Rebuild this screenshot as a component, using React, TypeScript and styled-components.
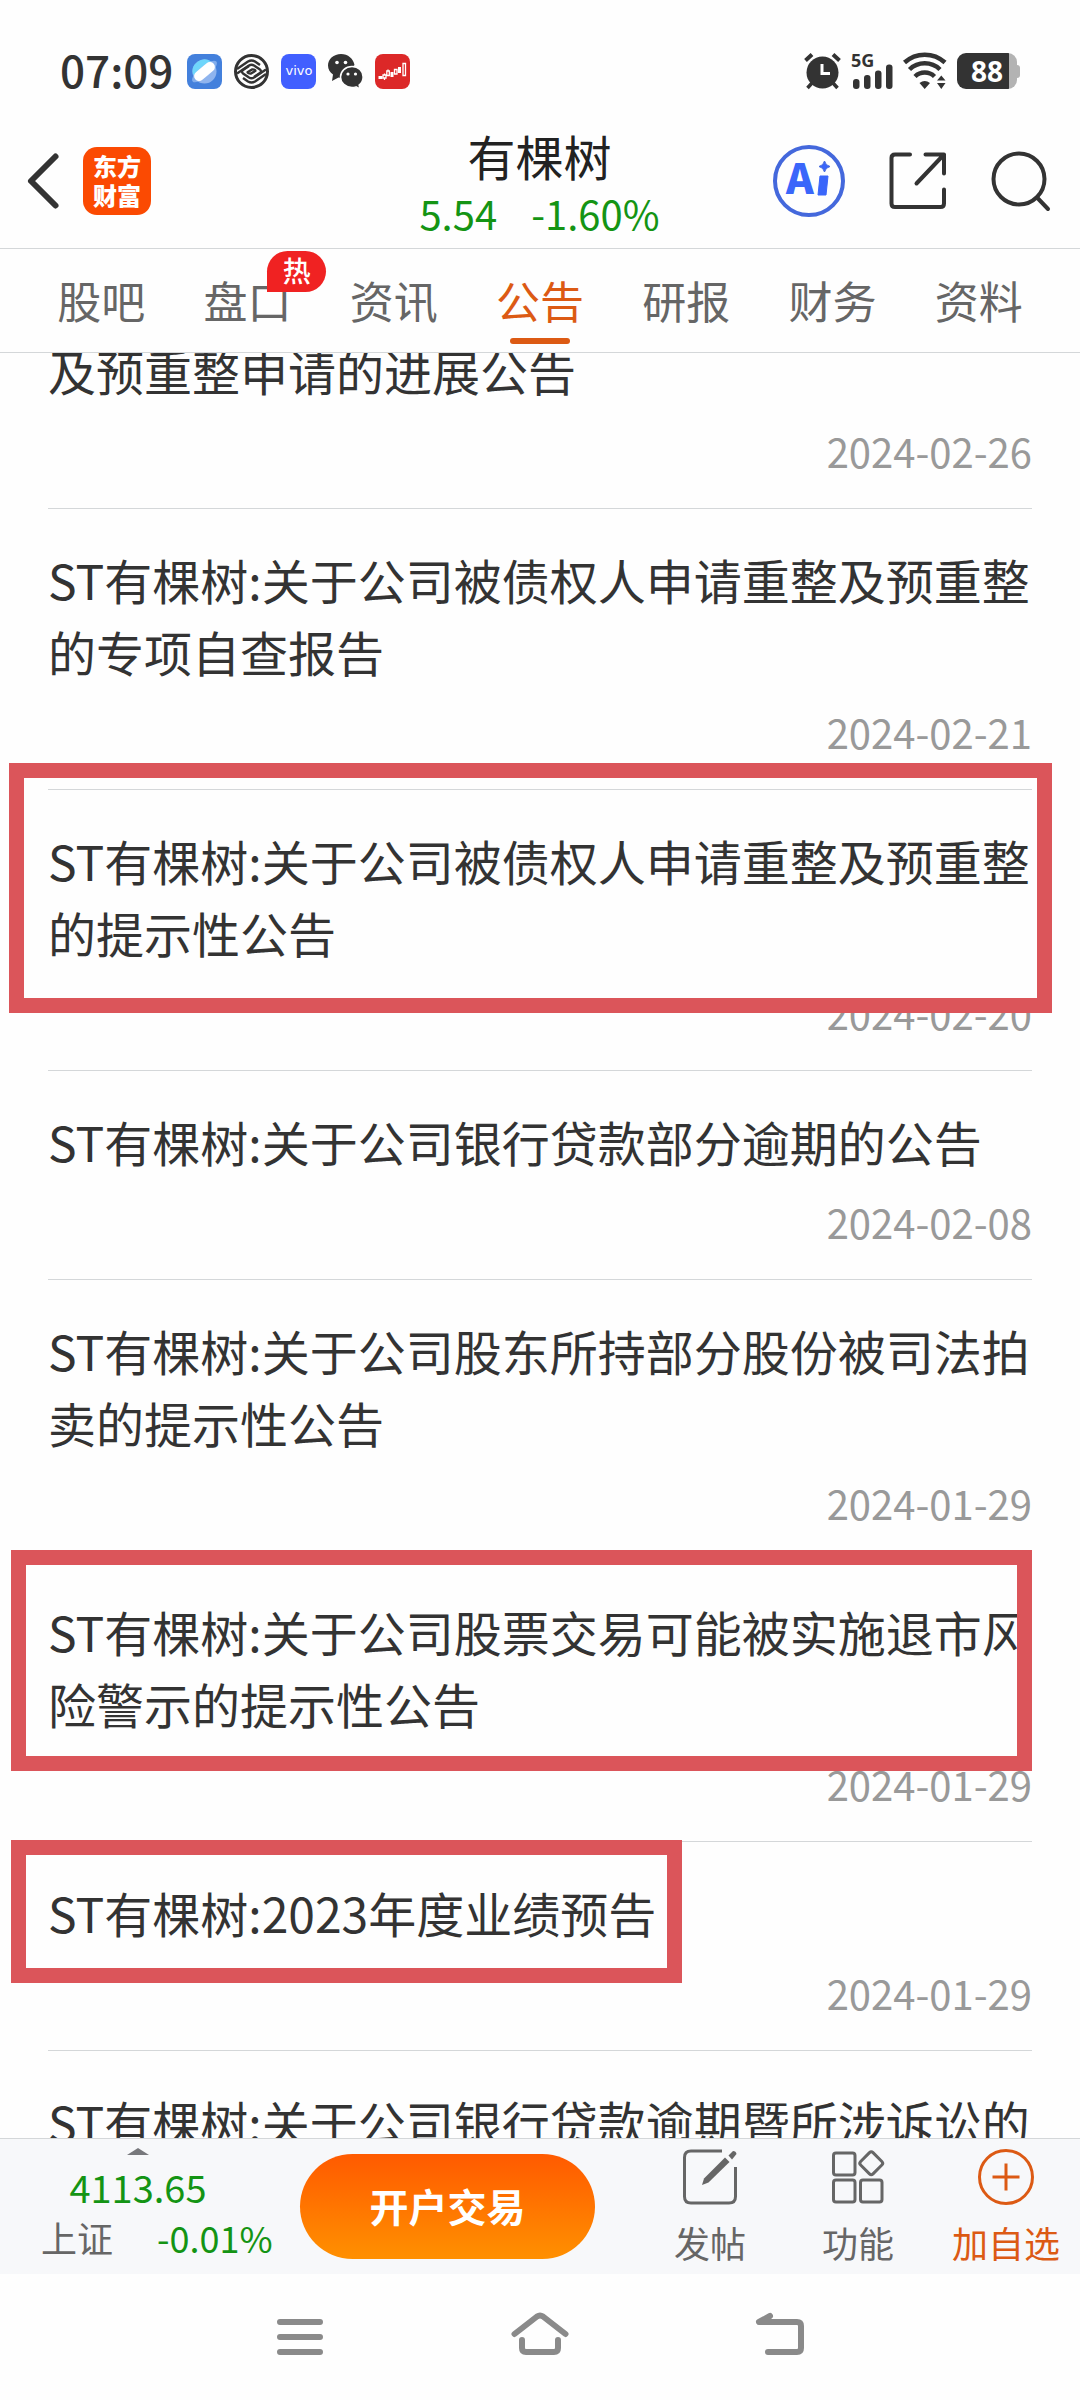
import React from "react";
import styled, { createGlobalStyle, css } from "styled-components";

const ink = "#333333";
const grey = "#666666";
const green = "#149414";
const orange = "#dc5a14";
const line = "#d4d7d9";

const GlobalStyle = createGlobalStyle`
  *, *::before, *::after { box-sizing: border-box; }
  body {
    margin: 0;
    background: #fefefe;
    color: ${ink};
    font-family: "Noto Sans CJK SC", "Noto Sans", sans-serif;
  }
  button { font: inherit; color: inherit; background: none; border: 0; padding: 0; cursor: pointer; }
  a { color: inherit; text-decoration: none; }
  svg { display: block; flex: none; overflow: visible; }
`;

const Screen = styled.div`
  display: flex;
  flex-direction: column;
  height: 100vh;
  overflow: hidden;
`;

/* ---------- status bar ---------- */

const StatusBar = styled.div`
  display: flex;
  align-items: center;
  justify-content: space-between;
  flex: none;
  padding: 28px 60px 0;
  height: 114px;
`;

const StatusGroup = styled.div<{ $gap: number }>`
  display: flex;
  align-items: center;
  gap: ${(p) => p.$gap}px;
`;

const Clock = styled.time`
  font-size: 44px;
  line-height: 48px;
  font-weight: 500;
  margin: -4px 2px 0 0;
`;

const AppBadge = styled.span<{ $color: string }>`
  display: flex;
  align-items: center;
  justify-content: center;
  width: 35px;
  height: 35px;
  border-radius: 8px;
  background: ${(p) => p.$color};
  color: #fff;
  font: 400 13px/14px "DejaVu Sans", sans-serif;
`;

const Battery = styled.span`
  display: flex;
  align-items: center;
  &::after {
    content: "";
    width: 3px;
    height: 13px;
    border-radius: 0 3px 3px 0;
    background: #b3b3b3;
  }
`;

const BatteryBody = styled.span`
  display: flex;
  align-items: center;
  justify-content: center;
  width: 60px;
  height: 36px;
  border-radius: 9px;
  background: linear-gradient(90deg, ${ink} 52px, #b3b3b3 52px);
  color: #fff;
  font: 700 28px/36px "Noto Sans", sans-serif;
`;

/* ---------- header ---------- */

const Header = styled.header`
  display: grid;
  grid-template-columns: 1fr auto 1fr;
  align-items: center;
  flex: none;
  height: 135px;
  padding: 0 29px 0 28px;
  border-bottom: 1px solid ${line};
`;

const HeaderSide = styled.div<{ $end?: boolean }>`
  display: flex;
  align-items: center;
  gap: ${(p) => (p.$end ? 44 : 24)}px;
  justify-content: ${(p) => (p.$end ? "flex-end" : "flex-start")};
`;

const BrandLogo = styled.a`
  display: flex;
  flex-direction: column;
  align-items: center;
  justify-content: center;
  width: 68px;
  height: 68px;
  padding-bottom: 2px;
  border-radius: 14px;
  background: #fb4a02;
  color: #fff;
  font-size: 24px;
  line-height: 29px;
  font-weight: 900;
`;

const Quote = styled.div`
  display: flex;
  flex-direction: column;
  align-items: center;
  padding-top: 4px;
`;

const StockName = styled.h1`
  margin: 0;
  font-size: 48px;
  line-height: 60px;
  font-weight: 400;
  color: #222;
`;

const StockPrice = styled.p`
  display: flex;
  gap: 34px;
  margin: 0;
  font-size: 40px;
  line-height: 56px;
  color: ${green};
`;

/* ---------- tabs ---------- */

const Tabs = styled.nav`
  display: flex;
  flex: none;
  height: 104px;
  padding: 0 28px;
  border-bottom: 1px solid ${line};
`;

const Tab = styled.button<{ $active?: boolean }>`
  position: relative;
  flex: 1;
  padding-bottom: 2px;
  font-size: 44px;
  line-height: 64px;
  color: ${(p) => (p.$active ? orange : grey)};
  ${(p) =>
    p.$active &&
    css`
      &::after {
        content: "";
        position: absolute;
        left: 50%;
        bottom: 8px;
        width: 60px;
        height: 6px;
        margin-left: -30px;
        border-radius: 3px;
        background: ${orange};
      }
    `}
`;

const HotBadge = styled.span`
  position: absolute;
  top: 2px;
  left: 93px;
  width: 59px;
  height: 41px;
  border-radius: 21px 21px 21px 0;
  background: #f02222;
  color: #fff;
  font-size: 28px;
  line-height: 38px;
  font-weight: 500;
  text-align: center;
`;

/* ---------- announcements ---------- */

const Viewport = styled.main`
  flex: 1;
  min-height: 0;
  overflow: hidden;
`;

/* The list rests part-way through a scroll, its first line under the tabs. */
const List = styled.ul`
  list-style: none;
  margin: -19px 0 0;
  padding: 0 48px;
`;

const Item = styled.li`
  position: relative;
  padding: 34px 0 33px;
  border-top: 1px solid ${line};
  &:first-child {
    padding-top: 0;
    border-top: 0;
  }
`;

const ItemTitle = styled.a`
  display: block;
  font-size: 48px;
  line-height: 72px;
`;

const ItemDate = styled.time`
  display: block;
  margin-top: 21px;
  font-size: 40px;
  line-height: 48px;
  color: #999;
  text-align: right;
`;

type Box = { top: number; left: number; right?: number; width?: number; height: number };

const Marker = styled.span<{ $box: Box }>`
  position: absolute;
  z-index: 1;
  top: ${(p) => p.$box.top}px;
  left: ${(p) => p.$box.left}px;
  ${(p) => (p.$box.width ? `width: ${p.$box.width}px;` : `right: ${p.$box.right}px;`)}
  height: ${(p) => p.$box.height}px;
  border: 15px solid #db555a;
  pointer-events: none;
`;

/* ---------- bottom bar ---------- */

const ActionBar = styled.footer`
  display: flex;
  align-items: center;
  flex: none;
  height: 136px;
  border-top: 1px solid ${line};
  background: #f7f8fa;
`;

const IndexPanel = styled.button`
  display: flex;
  flex-direction: column;
  align-items: center;
  align-self: stretch;
  width: 276px;
  padding-top: 9px;
`;

const IndexValue = styled.span`
  margin-top: 6px;
  font-size: 38px;
  line-height: 52px;
  color: ${green};
`;

const IndexRow = styled.span`
  display: flex;
  gap: 44px;
  align-self: flex-start;
  padding-left: 41px;
  font-size: 36px;
  line-height: 48px;
  color: ${grey};
  white-space: nowrap;
`;

const Change = styled.span`
  color: ${green};
`;

const TradeButton = styled.button`
  width: 295px;
  height: 105px;
  margin: 0 41px 0 24px;
  padding-bottom: 4px;
  border-radius: 53px;
  background: linear-gradient(180deg, #ff5a00, #ff9000);
  color: #fff;
  font-size: 39px;
  font-weight: 700;
`;

const Action = styled.button<{ $accent?: boolean }>`
  display: flex;
  flex: 1;
  flex-direction: column;
  align-items: center;
  justify-content: space-between;
  height: 118px;
  font-size: 36px;
  line-height: 48px;
  color: ${(p) => (p.$accent ? orange : grey)};
`;

const SystemNav = styled.nav`
  display: flex;
  align-items: center;
  flex: none;
  height: 126px;
  padding: 0 calc(100% / 6);
`;

const SystemButton = styled.button`
  display: flex;
  flex: 1;
  justify-content: center;
  color: #8a8a8a;
`;

/* ---------- icons ---------- */

const BrowserIcon = () => (
  <svg width="35" height="35" viewBox="0 0 35 35">
    <rect width="35" height="35" rx="8" fill="#4380dc" />
    <circle cx="17.5" cy="17.5" r="12" fill="#8fb4ee" />
    <path d="M6 21A12 12 0 0 1 24 7.500L12 18Z" fill="#6fd6fb" />
    <ellipse cx="17.500" cy="17.500" rx="15.500" ry="5.500" transform="rotate(-40 17.500 17.500)" fill="#9dc0f2" opacity=".7" />
    <rect x="5.500" y="12.500" width="24" height="10" rx="5" transform="rotate(-40 17.500 17.500)" fill="#fff" />
  </svg>
);

const MobileIcon = () => (
  <svg width="35" height="35" viewBox="0 0 35 35" fill="none" stroke="#333">
    <circle cx="17.5" cy="17.5" r="16" strokeWidth="3" />
    <g strokeWidth="2.400" strokeLinejoin="round">
      <path d="M3 15 14 7.500Q17.500 5.500 21 7.500L26 11" />
      <path d="M3 19.500 15 11.500Q17.500 10 20 11.500L26 15.500Q28 17.500 26 19L20 23" />
      <path d="M32 20 21 27.500Q17.500 29.500 14 27.500L9 24" />
      <path d="M32 15.500 20 23.500Q17.500 25 15 23.500L9 19.500Q7 17.500 9 16L15 12" />
      <path d="M13 18.500 18 15.500Q20 15 22 17" />
      <path d="M22 16.500 17 19.500Q15 20 13 18" />
    </g>
  </svg>
);

const WechatIcon = () => (
  <svg width="35" height="35" viewBox="0 0 35 35" fill="#333">
    <path d="M13 0C5.800 0 0 5 0 11.600c0 3.800 2 7 5 9L4 27l6.500-3.600c1 .2 2 .3 3 .3L26.500 11C25.500 4.800 20 0 13 0Z" />
    <path
      d="M24 12.500c-6.500 0-11.500 4.700-11.500 10.500S17.500 33.500 24 33.500c1.400 0 2.700-.2 4-.6l4 2.100-.9-4c2.500-1.900 4-4.800 4-8 0-5.800-4.700-10.500-11.100-10.500Z"
      stroke="#fefefe"
      strokeWidth="1.500"
    />
    <g fill="#fff">
      <circle cx="9" cy="8.500" r="1.800" />
      <circle cx="17.500" cy="8.500" r="1.800" />
      <circle cx="20" cy="20" r="1.600" />
      <circle cx="27.500" cy="20" r="1.600" />
    </g>
  </svg>
);

const CandlesIcon = () => (
  <svg width="35" height="35" viewBox="0 0 35 35">
    <rect width="35" height="35" rx="8" fill="#dc2828" />
    <g fill="#fff">
      <rect x="3.500" y="22" width="4" height="3" />
      <rect x="15.500" y="18" width="3" height="5" />
      <rect x="23" y="13" width="3" height="6" />
    </g>
    <g fill="none" stroke="#fff" strokeWidth="1.300">
      <path d="M9.500 20.500v-1M8 21h3v3h-3zM9.500 24v2M13 15.500v2M11.800 17h2.500v4.500h-2.500zM19.500 15.500h2.500v4.500h-2.500zM28 9.500h2.500v12H28z" />
    </g>
  </svg>
);

const AlarmIcon = () => (
  <svg width="37" height="36" viewBox="0 0 37 36" fill="none" stroke="#333">
    <circle cx="18.500" cy="19.500" r="16" fill="#333" stroke="none" />
    <path d="M1.500 7.500 8 1.500M35.500 7.500 29 1.500" strokeWidth="4" />
    <path d="M8 30 3.500 35M29 30l4.500 5" strokeWidth="3.500" />
    <path d="M18 11v9.500h8" stroke="#fff" strokeWidth="3" />
  </svg>
);

const SignalIcon = () => (
  <svg width="42" height="36" viewBox="0 0 42 36" fill="#333">
    <text x="0" y="13.500" fontFamily="Noto Sans, sans-serif" fontSize="18" fontWeight="700">5G</text>
    <rect x="2" y="26" width="6.500" height="10" rx="3" />
    <rect x="13" y="22" width="6.500" height="14" rx="3" />
    <rect x="24" y="17.500" width="6.500" height="18.500" rx="3" />
    <rect x="35" y="11.500" width="6.500" height="24.500" rx="3" />
  </svg>
);

const WifiIcon = () => (
  <svg width="44" height="36" viewBox="0 0 44 36" fill="none" stroke="#333" strokeWidth="4.500">
    <path d="M1.500 9.500A30 30 0 0 1 42 9.500" />
    <path d="M6.500 16.500A22 22 0 0 1 37 16.500" />
    <path d="M12 23.500A14 14 0 0 1 31.500 23.500" />
    <path d="M16.500 30Q21.700 26 27 30L21.700 36ZM34 27.500 38.300 22.500 42.500 27.500ZM34 30 38.300 36 42.500 30Z" fill="#333" stroke="none" />
  </svg>
);

const BackIcon = () => (
  <svg width="31" height="56" viewBox="0 0 31 56" fill="none" stroke="#333" strokeWidth="6" strokeLinecap="round" strokeLinejoin="round">
    <path d="M27.500 3.500 3 28 27.500 52.500" />
  </svg>
);

const AiIcon = () => (
  <svg width="72" height="74" viewBox="0 0 72 74">
    <circle cx="36" cy="37" r="34" fill="none" stroke="#4468dc" strokeWidth="4" />
    <text x="13" y="50" fontFamily="Noto Sans CJK SC, sans-serif" fontSize="42" fontWeight="900" fill="#3a66fa">A</text>
    <path d="M47 32h8l-2 19h-8z" fill="#3a66fa" stroke="#3a66fa" strokeLinejoin="round" />
    <path d="M51.500 17q1 4.500 5.500 5.500-4.500 1-5.500 5.500-1-4.500-5.500-5.500 4.500-1 5.500-5.500Z" fill="#3a66fa" stroke="#4468dc" />
  </svg>
);

const ShareIcon = () => (
  <svg width="58" height="58" viewBox="0 0 58 58" fill="none" stroke="#333" strokeWidth="4" strokeLinecap="round" strokeLinejoin="round">
    <path d="M21 2.500H6Q2.500 2.500 2.500 6V51.500Q2.500 55 6 55H51.500Q55 55 55 51.500V37.500" />
    <path d="M36.500 2.500H55V21.500M55 2.500 27.500 31.500" />
  </svg>
);

const SearchIcon = () => (
  <svg width="60" height="60" viewBox="0 0 60 60" fill="none" stroke="#333" strokeWidth="4" strokeLinecap="round">
    <circle cx="28" cy="28" r="25.500" />
    <path d="M46.500 47 57 58" />
  </svg>
);

const CaretIcon = () => (
  <svg width="22" height="7" viewBox="0 0 22 7">
    <path d="M11 0 22 7H0Z" fill="#77787c" />
  </svg>
);

const PostIcon = () => (
  <svg width="56" height="58" viewBox="0 0 56 58" fill="none" stroke="#666" strokeWidth="3">
    <path d="M40 3H9Q2.500 3 2.500 9.500V48.500Q2.500 55 9 55H47Q53.500 55 53.500 48.500V19" />
    <path d="M20 37 22 30.500 43 9.500 47.500 14 26.500 34.500Z" fill="#666" stroke="none" />
    <path d="M46.500 7.500 51 3Q54 3 54.500 6L50 11.500Z" fill="#666" stroke="none" />
  </svg>
);

const AppsIcon = () => (
  <svg width="52" height="58" viewBox="0 0 52 58" fill="none" stroke="#666" strokeWidth="3" strokeLinejoin="round">
    <rect x="1.500" y="5" width="21.500" height="22" rx="2.500" />
    <rect x="1.500" y="32" width="21.500" height="22" rx="2.500" />
    <rect x="28.500" y="32" width="21.500" height="22" rx="2.500" />
    <rect x="30.500" y="6.500" width="17.500" height="17.500" rx="2.500" transform="rotate(45 39.250 15.250)" />
  </svg>
);

const AddIcon = () => (
  <svg width="56" height="58" viewBox="0 0 56 58" fill="none" stroke="currentColor" strokeWidth="3">
    <circle cx="28" cy="29" r="26.500" />
    <path d="M28 15.500v27M14.500 29h27" />
  </svg>
);

const navStroke = {
  fill: "none",
  stroke: "currentColor",
  strokeWidth: 6,
  strokeLinecap: "round" as const,
  strokeLinejoin: "round" as const,
};

const MenuIcon = () => (
  <svg width="46" height="48" viewBox="0 0 46 48" {...navStroke}>
    <path d="M3 9h40M3 24h40M3 39h40" />
  </svg>
);

const HomeIcon = () => (
  <svg width="58" height="48" viewBox="0 0 58 48" {...navStroke}>
    <path d="M3.500 21 26 3.500Q29 1.500 32 3.500L54.500 21M11 27V35Q11 39 15 39H43Q47 39 47 35V27" />
  </svg>
);

const ReturnIcon = () => (
  <svg width="48" height="48" viewBox="0 0 48 48" {...navStroke}>
    <path d="M14 3 3 9H41Q45 9 45 13V35Q45 39 41 39H12" />
  </svg>
);

/* ---------- data ---------- */

const tabs = ["股吧", "盘口", "资讯", "公告", "研报", "财务", "资料"];

const announcements: { title: string; date: string; box?: Box }[] = [
  { title: "及预重整申请的进展公告", date: "2024-02-26" },
  { title: "ST有棵树:关于公司被债权人申请重整及预重整的专项自查报告", date: "2024-02-21" },
  {
    title: "ST有棵树:关于公司被债权人申请重整及预重整的提示性公告",
    date: "2024-02-20",
    box: { top: -27, left: -39, right: -20, height: 250 },
  },
  { title: "ST有棵树:关于公司银行贷款部分逾期的公告", date: "2024-02-08" },
  { title: "ST有棵树:关于公司股东所持部分股份被司法拍卖的提示性公告", date: "2024-01-29" },
  {
    title: "ST有棵树:关于公司股票交易可能被实施退市风险警示的提示性公告",
    date: "2024-01-29",
    box: { top: -11, left: -37, right: 0, height: 221 },
  },
  {
    title: "ST有棵树:2023年度业绩预告",
    date: "2024-01-29",
    box: { top: -2, left: -37, width: 671, height: 143 },
  },
  { title: "ST有棵树:关于公司银行贷款逾期暨所涉诉讼的", date: "" },
];

export default function App() {
  return (
    <Screen>
      <GlobalStyle />
      <StatusBar>
        <StatusGroup $gap={12}>
          <Clock>07:09</Clock>
          <BrowserIcon />
          <MobileIcon />
          <AppBadge $color="#415fff">vivo</AppBadge>
          <WechatIcon />
          <CandlesIcon />
        </StatusGroup>
        <StatusGroup $gap={10}>
          <AlarmIcon />
          <SignalIcon />
          <WifiIcon />
          <Battery>
            <BatteryBody>88</BatteryBody>
          </Battery>
        </StatusGroup>
      </StatusBar>

      <Header>
        <HeaderSide>
          <button aria-label="返回">
            <BackIcon />
          </button>
          <BrandLogo href="#home">
            <span>东方</span>
            <span>财富</span>
          </BrandLogo>
        </HeaderSide>
        <Quote>
          <StockName>有棵树</StockName>
          <StockPrice>
            <span>5.54</span>
            <span>-1.60%</span>
          </StockPrice>
        </Quote>
        <HeaderSide $end>
          <button aria-label="Ai">
            <AiIcon />
          </button>
          <button aria-label="分享">
            <ShareIcon />
          </button>
          <button aria-label="搜索">
            <SearchIcon />
          </button>
        </HeaderSide>
      </Header>

      <Tabs>
        {tabs.map((tab) => (
          <Tab key={tab} $active={tab === "公告"}>
            {tab}
            {tab === "盘口" && <HotBadge>热</HotBadge>}
          </Tab>
        ))}
      </Tabs>

      <Viewport>
        <List>
          {announcements.map((item, i) => (
            <Item key={i}>
              <ItemTitle href={`#notice-${i}`}>{item.title}</ItemTitle>
              {item.date && <ItemDate>{item.date}</ItemDate>}
              {item.box && <Marker $box={item.box} />}
            </Item>
          ))}
        </List>
      </Viewport>

      <ActionBar>
        <IndexPanel>
          <CaretIcon />
          <IndexValue>4113.65</IndexValue>
          <IndexRow>
            <span>上证</span>
            <Change>-0.01%</Change>
          </IndexRow>
        </IndexPanel>
        <TradeButton>开户交易</TradeButton>
        <Action>
          <PostIcon />
          发帖
        </Action>
        <Action>
          <AppsIcon />
          功能
        </Action>
        <Action $accent>
          <AddIcon />
          加自选
        </Action>
      </ActionBar>

      <SystemNav>
        <SystemButton aria-label="最近任务">
          <MenuIcon />
        </SystemButton>
        <SystemButton aria-label="主屏幕">
          <HomeIcon />
        </SystemButton>
        <SystemButton aria-label="后退">
          <ReturnIcon />
        </SystemButton>
      </SystemNav>
    </Screen>
  );
}
